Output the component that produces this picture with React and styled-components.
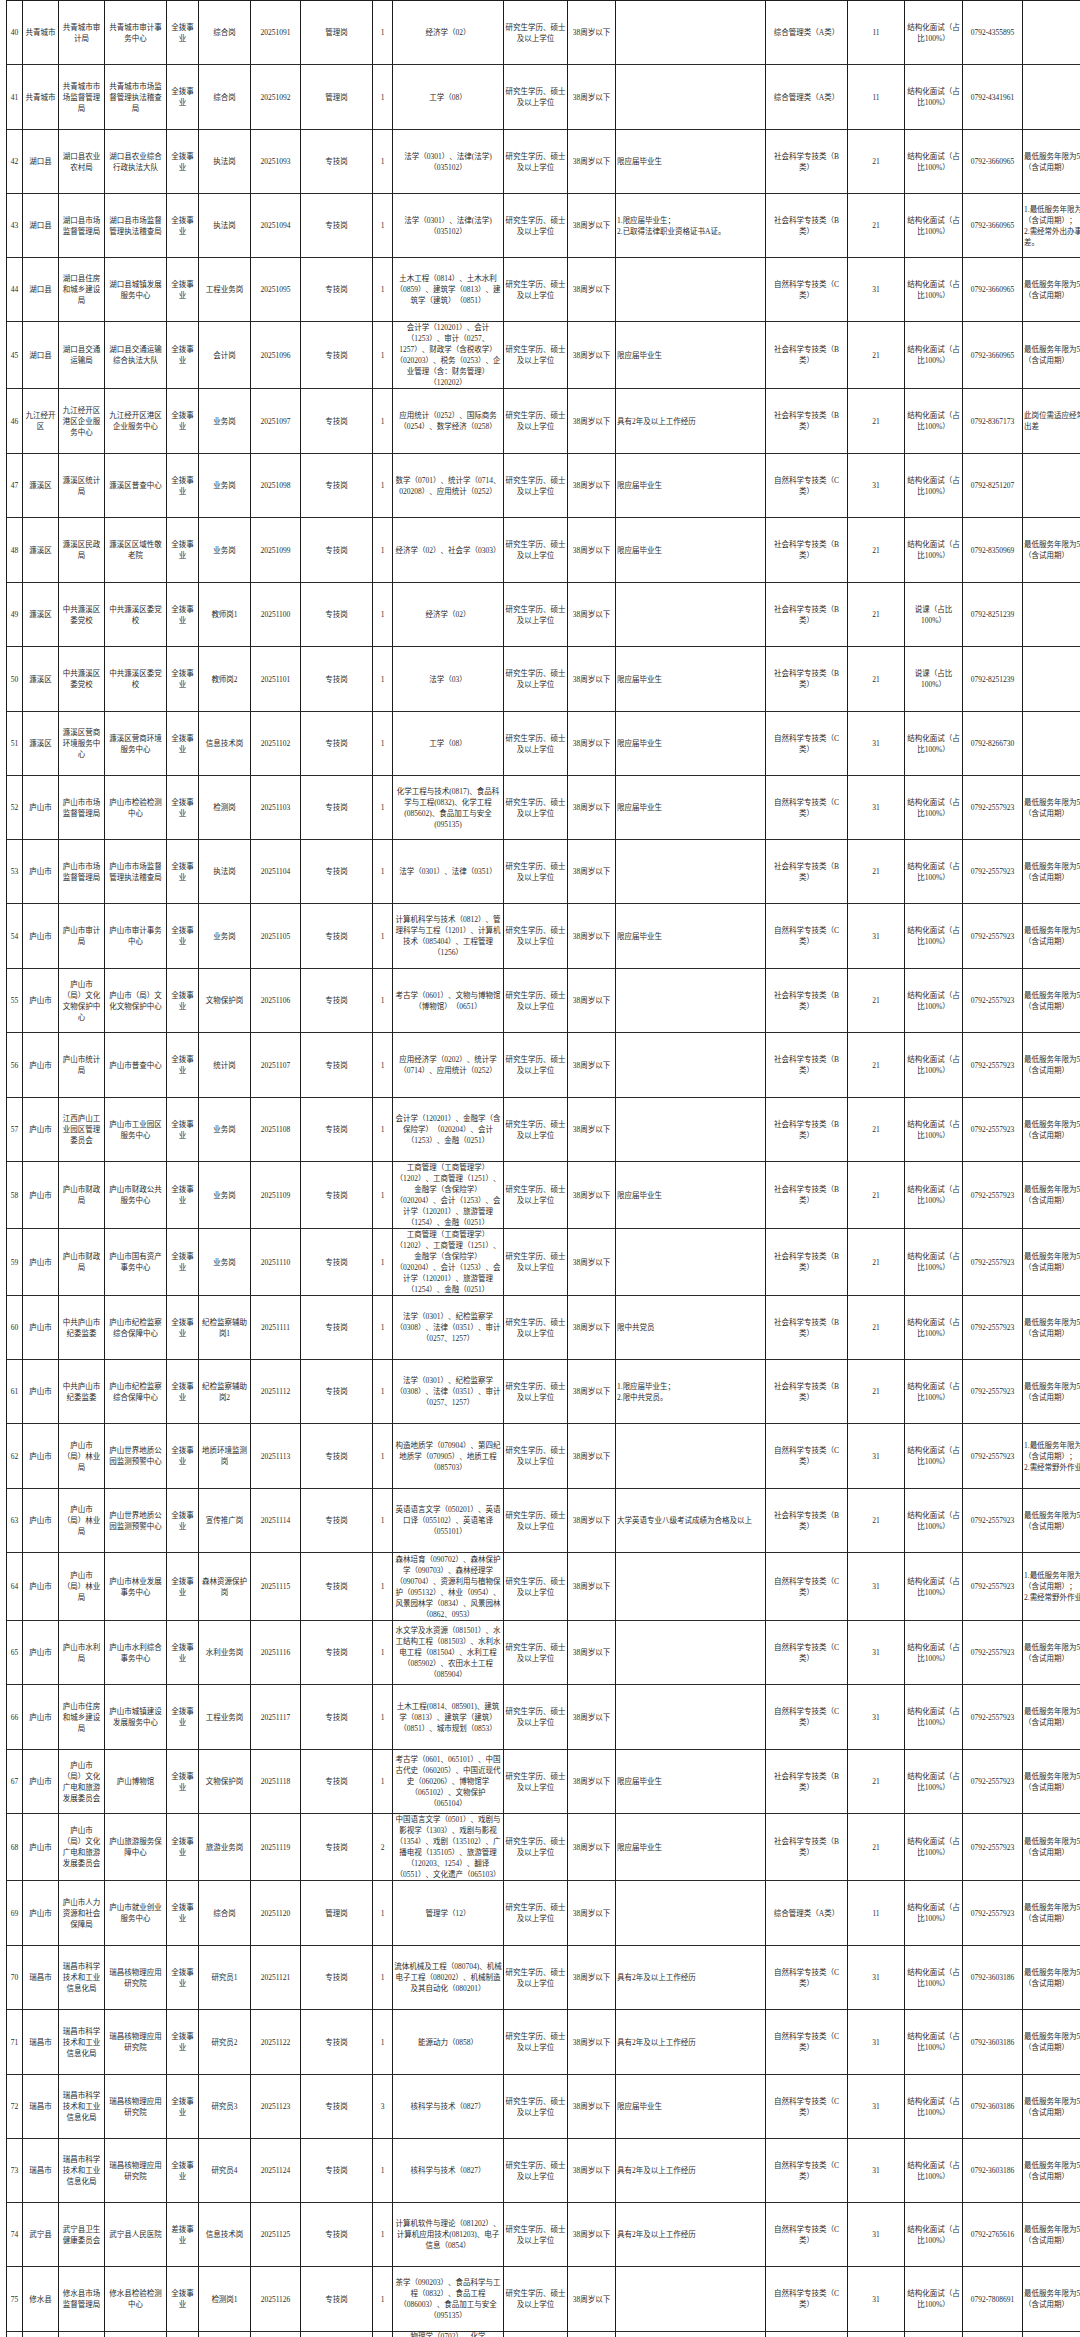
import React from 'react';
import styled, { createGlobalStyle } from 'styled-components';

const GlobalStyle = createGlobalStyle`
  html, body {
    margin: 0;
    padding: 0;
    background: #ffffff;
    overflow: hidden;
  }
  body {
    font-family: "Liberation Serif", "Noto Sans CJK SC", serif;
    color: #2b2b2b;
  }
`;

// column widths (px), borders included
const COLS = [16, 36, 46, 62, 32, 52, 50, 72, 20, 111, 64, 48, 150, 82, 57, 58, 60, 80];
const LEFT_COLS = [12, 17];
const NOWRAP_COLS = [10, 17];

const Sheet = styled.div`
  margin-left: 6px;
  width: ${COLS.reduce((a, b) => a + b, 0)}px;
  border-left: 1px solid #1c1c1c;
  border-top: 1px solid #1c1c1c;
`;

const Row = styled.div`
  display: grid;
  grid-template-columns: ${COLS.map(w => `${w}px`).join(' ')};
  height: ${props => props.$h}px;
`;

const Cell = styled.div`
  box-sizing: border-box;
  display: flex;
  align-items: center;
  justify-content: ${props => (props.$left ? 'flex-start' : 'center')};
  text-align: ${props => (props.$left ? 'left' : 'center')};
  padding: 0 1px;
  border-right: 1px solid #1c1c1c;
  border-bottom: 1px solid #2a2a2a;
  font-size: 7.5px;
  line-height: 11px;
  text-spacing-trim: space-all;
  white-space: ${props => (props.$nowrap ? 'pre' : 'pre-line')};
  overflow: ${props => (props.$nowrap ? 'visible' : 'hidden')};
  min-width: 0;
`;

const EDU = '研究生学历、硕士\n及以上学位';
const AGE = '38周岁以下';
const IV = '结构化面试（占\n比100%）';
const TALK = '说课（占比\n100%）';
const EXAM = {
  A: ['综合管理类（A类）', '11'],
  B: ['社会科学专技类（B\n类）', '21'],
  C: ['自然科学专技类（C\n类）', '31'],
};
const M = '最低服务年限为5年\n（含试用期）';
const FIELD = '1.最低服务年限为5年\n（含试用期）；\n2.需经常野外作业。';
const YJ = '限应届毕业生';
const EXP = '具有2年及以上工作经历';
const ACC = '工商管理（工商管理学）\n（1202）、工商管理（1251）、\n金融学（含保险学）\n（020204）、会计（1253）、会\n计学（120201）、旅游管理\n（1254）、金融（0251）';
const DISC = '法学（0301）、纪检监察学\n（0308）、法律（0351）、审计\n（0257、1257）';
const LS = '庐山市';
const RC = '瑞昌市科学技术和工业信息化局';

// [no, h, county, dept, unit, type, post, code, cat, count, major, cond, exam, interview, phone, note]
const rows = [
  [40, 64, '共青城市', '共青城市审计局', '共青城市审计事务中心', '全拨事业', '综合岗', '20251091', '管理岗', '1', '经济学（02）', '', 'A', IV, '0792-4355895', ''],
  [41, 65, '共青城市', '共青城市市场监督管理局', '共青城市市场监督管理执法稽查局', '全拨事业', '综合岗', '20251092', '管理岗', '1', '工学（08）', '', 'A', IV, '0792-4341961', ''],
  [42, 64, '湖口县', '湖口县农业农村局', '湖口县农业综合行政执法大队', '全拨事业', '执法岗', '20251093', '专技岗', '1', '法学（0301）、法律(法学)\n（035102）', YJ, 'B', IV, '0792-3660965', M],
  [43, 64, '湖口县', '湖口县市场监督管理局', '湖口县市场监督管理执法稽查局', '全拨事业', '执法岗', '20251094', '专技岗', '1', '法学（0301）、法律(法学)\n（035102）', '1.限应届毕业生；\n2.已取得法律职业资格证书A证。', 'B', IV, '0792-3660965', '1.最低服务年限为5年\n（含试用期）；\n2.需经常外出办事出\n差。'],
  [44, 64, '湖口县', '湖口县住房和城乡建设局', '湖口县城镇发展服务中心', '全拨事业', '工程业务岗', '20251095', '专技岗', '1', '土木工程（0814）、土木水利\n（0859）、建筑学（0813）、建\n筑学（建筑）（0851）', '', 'C', IV, '0792-3660965', M],
  [45, 67, '湖口县', '湖口县交通运输局', '湖口县交通运输综合执法大队', '全拨事业', '会计岗', '20251096', '专技岗', '1', '会计学（120201）、会计\n（1253）、审计（0257、\n1257）、财政学（含税收学）\n（020203）、税务（0253）、企\n业管理（含：财务管理）\n（120202）', YJ, 'B', IV, '0792-3660965', M],
  [46, 65, '九江经开区', '九江经开区港区企业服务中心', '九江经开区港区企业服务中心', '全拨事业', '业务岗', '20251097', '专技岗', '1', '应用统计（0252）、国际商务\n（0254）、数学经济（0258）', EXP, 'B', IV, '0792-8367173', '此岗位需适应经常外\n出差'],
  [47, 64, '濂溪区', '濂溪区统计局', '濂溪区普查中心', '全拨事业', '业务岗', '20251098', '专技岗', '1', '数学（0701）、统计学（0714、\n020208）、应用统计（0252）', YJ, 'C', IV, '0792-8251207', ''],
  [48, 65, '濂溪区', '濂溪区民政局', '濂溪区区域性敬老院', '全拨事业', '业务岗', '20251099', '专技岗', '1', '经济学（02）、社会学（0303）', YJ, 'B', IV, '0792-8350969', M],
  [49, 64, '濂溪区', '中共濂溪区委党校', '中共濂溪区委党校', '全拨事业', '教师岗1', '20251100', '专技岗', '1', '经济学（02）', '', 'B', TALK, '0792-8251239', ''],
  [50, 65, '濂溪区', '中共濂溪区委党校', '中共濂溪区委党校', '全拨事业', '教师岗2', '20251101', '专技岗', '1', '法学（03）', YJ, 'B', TALK, '0792-8251239', ''],
  [51, 64, '濂溪区', '濂溪区营商环境服务中心', '濂溪区营商环境服务中心', '全拨事业', '信息技术岗', '20251102', '专技岗', '1', '工学（08）', YJ, 'C', IV, '0792-8266730', ''],
  [52, 64, LS, '庐山市市场监督管理局', '庐山市检验检测中心', '全拨事业', '检测岗', '20251103', '专技岗', '1', '化学工程与技术(0817)、食品科\n学与工程(0832)、化学工程\n(085602)、食品加工与安全\n(095135)', YJ, 'C', IV, '0792-2557923', M],
  [53, 64, LS, '庐山市市场监督管理局', '庐山市市场监督管理执法稽查局', '全拨事业', '执法岗', '20251104', '专技岗', '1', '法学（0301）、法律（0351）', '', 'B', IV, '0792-2557923', M],
  [54, 65, LS, '庐山市审计局', '庐山市审计事务中心', '全拨事业', '业务岗', '20251105', '专技岗', '1', '计算机科学与技术（0812）、管\n理科学与工程（1201）、计算机\n技术（085404）、工程管理\n（1256）', YJ, 'C', IV, '0792-2557923', M],
  [55, 64, LS, '庐山市（局）文化文物保护中心', '庐山市（局）文化文物保护中心', '全拨事业', '文物保护岗', '20251106', '专技岗', '1', '考古学（0601）、文物与博物馆\n（博物馆）（0651）', '', 'B', IV, '0792-2557923', M],
  [56, 65, LS, '庐山市统计局', '庐山市普查中心', '全拨事业', '统计岗', '20251107', '专技岗', '1', '应用经济学（0202）、统计学\n（0714）、应用统计（0252）', '', 'B', IV, '0792-2557923', M],
  [57, 64, LS, '江西庐山工业园区管理委员会', '庐山市工业园区服务中心', '全拨事业', '业务岗', '20251108', '专技岗', '1', '会计学（120201）、金融学（含\n保险学）（020204）、会计\n（1253）、金融（0251）', '', 'B', IV, '0792-2557923', M],
  [58, 67, LS, '庐山市财政局', '庐山市财政公共服务中心', '全拨事业', '业务岗', '20251109', '专技岗', '1', ACC, YJ, 'B', IV, '0792-2557923', M],
  [59, 67, LS, '庐山市财政局', '庐山市国有资产事务中心', '全拨事业', '业务岗', '20251110', '专技岗', '1', ACC, '', 'B', IV, '0792-2557923', M],
  [60, 64, LS, '中共庐山市纪委监委', '庐山市纪检监察综合保障中心', '全拨事业', '纪检监察辅助岗1', '20251111', '专技岗', '1', DISC, '限中共党员', 'B', IV, '0792-2557923', M],
  [61, 64, LS, '中共庐山市纪委监委', '庐山市纪检监察综合保障中心', '全拨事业', '纪检监察辅助岗2', '20251112', '专技岗', '1', DISC, '1.限应届毕业生；\n2.限中共党员。', 'B', IV, '0792-2557923', M],
  [62, 65, LS, '庐山市（局）林业局', '庐山世界地质公园监测预警中心', '全拨事业', '地质环境监测岗', '20251113', '专技岗', '1', '构造地质学（070904）、第四纪\n地质学（070905）、地质工程\n（085703）', '', 'C', IV, '0792-2557923', FIELD],
  [63, 64, LS, '庐山市（局）林业局', '庐山世界地质公园监测预警中心', '全拨事业', '宣传推广岗', '20251114', '专技岗', '1', '英语语言文学（050201）、英语\n口译（055102）、英语笔译\n（055101）', '大学英语专业八级考试成绩为合格及以上', 'B', IV, '0792-2557923', M],
  [64, 68, LS, '庐山市（局）林业局', '庐山市林业发展事务中心', '全拨事业', '森林资源保护岗', '20251115', '专技岗', '1', '森林培育（090702）、森林保护\n学（090703）、森林经理学\n（090704）、资源利用与植物保\n护（095132）、林业（0954）、\n风景园林学（0834）、风景园林\n（0862、0953）', '', 'C', IV, '0792-2557923', FIELD],
  [65, 64, LS, '庐山市水利局', '庐山市水利综合事务中心', '全拨事业', '水利业务岗', '20251116', '专技岗', '1', '水文学及水资源（081501）、水\n工结构工程（081503）、水利水\n电工程（081504）、水利工程\n（085902）、农田水土工程\n（085904）', '', 'C', IV, '0792-2557923', M],
  [66, 65, LS, '庐山市住房和城乡建设局', '庐山市城镇建设发展服务中心', '全拨事业', '工程业务岗', '20251117', '专技岗', '1', '土木工程(0814、085901)、建筑\n学（0813）、建筑学（建筑）\n（0851）、城市规划（0853）', '', 'C', IV, '0792-2557923', M],
  [67, 64, LS, '庐山市（局）文化广电和旅游发展委员会', '庐山博物馆', '全拨事业', '文物保护岗', '20251118', '专技岗', '1', '考古学（0601、065101）、中国\n古代史（060205）、中国近现代\n史（060206）、博物馆学\n（065102）、文物保护\n（065104）', YJ, 'B', IV, '0792-2557923', M],
  [68, 67, LS, '庐山市（局）文化广电和旅游发展委员会', '庐山旅游服务保障中心', '全拨事业', '旅游业务岗', '20251119', '专技岗', '2', '中国语言文学（0501）、戏剧与\n影视学（1303）、戏剧与影视\n（1354）、戏剧（135102）、广\n播电视（135105）、旅游管理\n（120203、1254）、翻译\n（0551）、文化遗产（065103）', YJ, 'B', IV, '0792-2557923', M],
  [69, 65, LS, '庐山市人力资源和社会保障局', '庐山市就业创业服务中心', '全拨事业', '综合岗', '20251120', '管理岗', '1', '管理学（12）', '', 'A', IV, '0792-2557923', M],
  [70, 64, '瑞昌市', RC, '瑞昌核物理应用研究院', '全拨事业', '研究员1', '20251121', '专技岗', '1', '流体机械及工程（080704)、机械\n电子工程（080202）、机械制造\n及其自动化（080201）', EXP, 'C', IV, '0792-3603186', M],
  [71, 65, '瑞昌市', RC, '瑞昌核物理应用研究院', '全拨事业', '研究员2', '20251122', '专技岗', '1', '能源动力（0858）', EXP, 'C', IV, '0792-3603186', M],
  [72, 64, '瑞昌市', RC, '瑞昌核物理应用研究院', '全拨事业', '研究员3', '20251123', '专技岗', '3', '核科学与技术（0827）', YJ, 'C', IV, '0792-3603186', M],
  [73, 64, '瑞昌市', RC, '瑞昌核物理应用研究院', '全拨事业', '研究员4', '20251124', '专技岗', '1', '核科学与技术（0827）', EXP, 'C', IV, '0792-3603186', M],
  [74, 64, '武宁县', '武宁县卫生健康委员会', '武宁县人民医院', '差拨事业', '信息技术岗', '20251125', '专技岗', '1', '计算机软件与理论（081202）、\n计算机应用技术(081203)、电子\n信息（0854）', EXP, 'C', IV, '0792-2765616', M],
  [75, 65, '修水县', '修水县市场监督管理局', '修水县检验检测中心', '全拨事业', '检测岗1', '20251126', '专技岗', '1', '茶学（090203）、食品科学与工\n程（0832）、食品工程\n（086003）、食品加工与安全\n（095135）', '', 'C', IV, '0792-7808691', M],
  [76, 65, '修水县', '修水县市场监督管理局', '修水县检验检测中心', '全拨事业', '检测岗2', '20251127', '专技岗', '1', '物理学（0702）、化学（0703）、\n生物学（0710）、化学工程与技\n术（0817）、食品科学与工程\n（0832）、生物与医药\n（0860）', '', 'C', IV, '0792-7808691', M],
];

function toCells(r) {
  const [no, , county, dept, unit, type, post, code, cat, count, major, cond, exam, interview, phone, note] = r;
  const [examName, examCode] = EXAM[exam];
  return [String(no), county, dept, unit, type, post, code, cat, count, major, EDU, AGE, cond, examName, examCode, interview, phone, note];
}

function PostRow({ data }) {
  const cells = toCells(data);
  return (
    <Row $h={data[1]}>
      {cells.map((text, i) => (
        <Cell key={i} $left={LEFT_COLS.includes(i)} $nowrap={NOWRAP_COLS.includes(i)}>
          {text}
        </Cell>
      ))}
    </Row>
  );
}

export default function App() {
  return (
    <>
      <GlobalStyle />
      <Sheet>
        {rows.map(r => (
          <PostRow key={r[0]} data={r} />
        ))}
      </Sheet>
    </>
  );
}
